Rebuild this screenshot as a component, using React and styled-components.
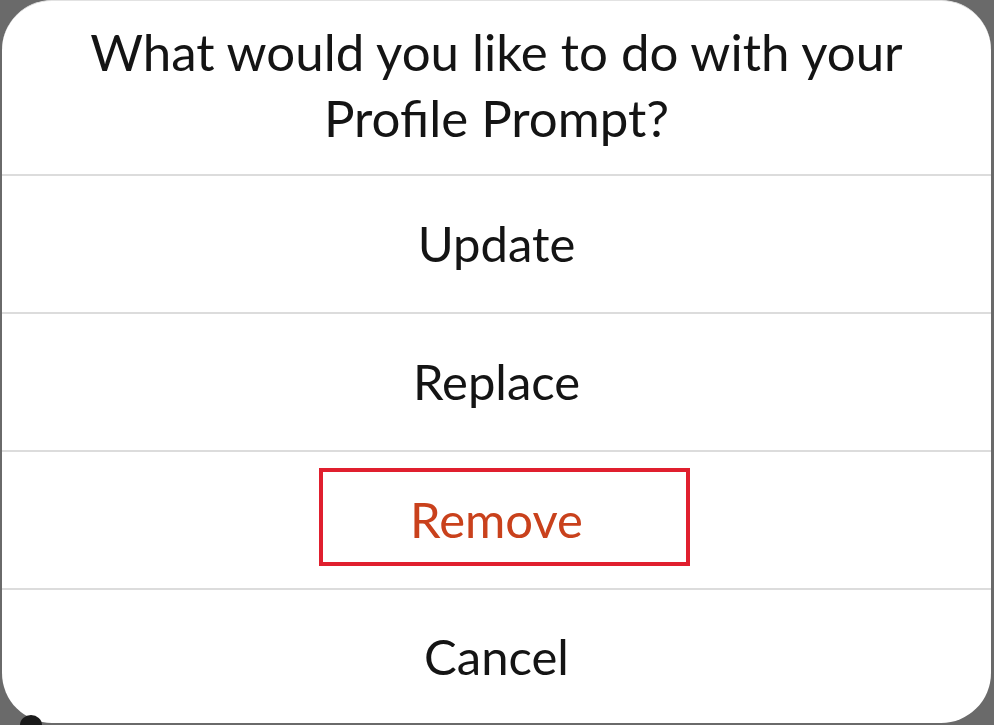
import styled, { createGlobalStyle } from 'styled-components';

const GlobalStyle = createGlobalStyle`
  html, body {
    margin: 0;
    padding: 0;
    background: #6a6a6a;
  }
  body {
    font-family: Lato, "Noto Sans", sans-serif;
  }
`;

const options = [
  { label: 'Update' },
  { label: 'Replace' },
  { label: 'Remove', danger: true, marked: true },
  { label: 'Cancel', last: true },
];

const App = () => {
  return (
    <>
      <GlobalStyle />
      <Screen>
        <Sheet>
          <Title>
            What would you like to do with your
            <br />
            Profile Prompt?
          </Title>
          {options.map((opt) => (
            <Option key={opt.label} $danger={opt.danger} $last={opt.last}>
              {opt.label}
              {opt.marked && <Highlight />}
            </Option>
          ))}
        </Sheet>
        <Speck />
      </Screen>
    </>
  );
};

export default App;

const Screen = styled.div`
  position: relative;
  width: 994px;
  height: 725px;
  padding-left: 2px;
  box-sizing: border-box;
  overflow: hidden;
`;

const Sheet = styled.div`
  width: 989px;
  height: 723px;
  background: #ffffff;
  border-top: 1px solid #e2e2e2;
  box-sizing: border-box;
  border-radius: 50px;
  overflow: hidden;
  display: flex;
  flex-direction: column;
`;

const Title = styled.div`
  height: 175px;
  flex-shrink: 0;
  box-sizing: border-box;
  padding-top: 18px;
  text-align: center;
  font-size: 51px;
  line-height: 66px;
  color: #141414;
  border-bottom: 2px solid #dcdcdc;
`;

const Option = styled.div`
  position: relative;
  height: ${(p) => (p.$last ? 'auto' : '138px')};
  flex: ${(p) => (p.$last ? '1' : '0 0 auto')};
  display: flex;
  align-items: center;
  justify-content: center;
  padding-bottom: 2px;
  box-sizing: border-box;
  font-size: 49px;
  color: ${(p) => (p.$danger ? '#c9411c' : '#141414')};
  border-bottom: ${(p) => (p.$last ? 'none' : '2px solid #dcdcdc')};
`;

const Highlight = styled.span`
  position: absolute;
  left: 317px;
  top: 16px;
  width: 371px;
  height: 98px;
  box-sizing: border-box;
  border: 4px solid #e01f2e;
  pointer-events: none;
`;

const Speck = styled.div`
  position: absolute;
  left: 20px;
  bottom: -10px;
  width: 22px;
  height: 20px;
  border-radius: 50%;
  background: #1a1a1a;
`;
